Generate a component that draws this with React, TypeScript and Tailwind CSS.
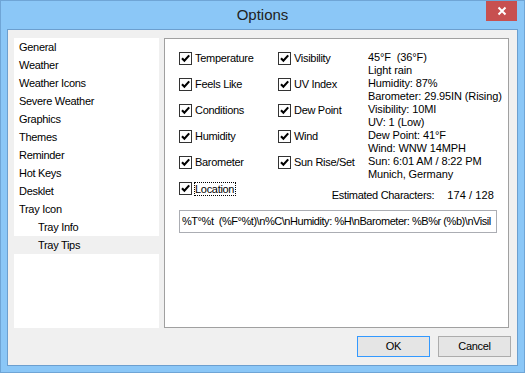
import React from "react";

const font = { fontFamily: '"Liberation Sans", Arial, sans-serif' };

const navItems = [
  { label: "General", indent: false },
  { label: "Weather", indent: false },
  { label: "Weather Icons", indent: false },
  { label: "Severe Weather", indent: false },
  { label: "Graphics", indent: false },
  { label: "Themes", indent: false },
  { label: "Reminder", indent: false },
  { label: "Hot Keys", indent: false },
  { label: "Desklet", indent: false },
  { label: "Tray Icon", indent: false },
  { label: "Tray Info", indent: true },
  { label: "Tray Tips", indent: true, selected: true },
];

const colOne = ["Temperature", "Feels Like", "Conditions", "Humidity", "Barometer"];
const colTwo = ["Visibility", "UV Index", "Dew Point", "Wind", "Sun Rise/Set"];

const preview = [
  "45°F  (36°F)",
  "Light rain",
  "Humidity: 87%",
  "Barometer: 29.95IN (Rising)",
  "Visibility: 10MI",
  "UV: 1 (Low)",
  "Dew Point: 41°F",
  "Wind: WNW 14MPH",
  "Sun: 6:01 AM / 8:22 PM",
  "Munich, Germany",
];

const CheckBox = () => (
  <svg width="13" height="13" viewBox="0 0 13 13" className="shrink-0">
    <rect x="0.5" y="0.5" width="12" height="12" fill="#fff" stroke="#333" />
    <path d="M3 6.2 L5.4 8.8 L10.2 3.4" fill="none" stroke="#000" strokeWidth="2.1" />
  </svg>
);

const CheckRow = ({ label, focused }: { label: string; focused?: boolean }) => (
  <div className="flex h-[13px] items-center gap-[3px]">
    <CheckBox />
    {focused ? (
      <span className="-ml-px border border-dotted border-black leading-[12px] pr-px">{label}</span>
    ) : (
      <span className="leading-[13px] whitespace-nowrap">{label}</span>
    )}
  </div>
);

export default function App() {
  return (
    <div
      className="w-[525px] h-[373px] bg-[#8bc7f7] border border-[#6fa5d6] text-[11px] tracking-[-0.3px] text-black"
      style={font}
    >
      <div className="relative h-[28px] flex items-center justify-center">
        <span className="text-[15px] tracking-normal text-[#222] pt-[1px]">Options</span>
        <div className="absolute top-0 right-[7px] w-[31px] h-[20px] bg-[#c75050] flex items-center justify-center">
          <svg width="10" height="10" viewBox="0 0 10 10">
            <path d="M1.5 1.5 L8.5 8.5 M8.5 1.5 L1.5 8.5" stroke="#fff" strokeWidth="2" />
          </svg>
        </div>
      </div>

      <div className="mx-[6px] h-[337px] border border-[#6c9fcf] bg-[#f0f0f0] flex flex-col">
        <div className="flex pl-[6px] pt-[8px] gap-[5px]">
          <div className="w-[145px] h-[290px] bg-white">
            {navItems.map((item) => (
              <div
                key={item.label}
                className={`h-[18px] flex items-center ${item.indent ? "pl-[24px]" : "pl-[5px]"} ${
                  item.selected ? "bg-[#f0f0f0]" : ""
                }`}
              >
                {item.label}
              </div>
            ))}
          </div>

          <div className="w-[345px] h-[290px] bg-white border border-[#a0a0a0] pl-[14px] pt-[13px]">
            <div className="flex">
              <div className="w-[99px] shrink-0 flex flex-col gap-[13px]">
                {colOne.map((l) => (
                  <CheckRow key={l} label={l} />
                ))}
                <CheckRow label="Location" focused />
              </div>
              <div className="flex-1 flex flex-col">
                <div className="flex">
                  <div className="w-[90px] shrink-0 flex flex-col gap-[13px]">
                    {colTwo.map((l) => (
                      <CheckRow key={l} label={l} />
                    ))}
                  </div>
                  <div className="-mt-px flex flex-col leading-[13px] whitespace-pre tracking-[-0.12px]">
                    {preview.map((l) => (
                      <div key={l}>{l}</div>
                    ))}
                  </div>
                </div>
                <div className="mt-[8px] flex justify-end pr-[14px] gap-[13px] leading-[13px]">
                  <span>Estimated Characters:</span>
                  <span className="tracking-[0.1px]">174 / 128</span>
                </div>
              </div>
            </div>
            <div className="mt-[8px] w-[318px] h-[23px] border border-[#abadb3] flex items-center pl-[2px] overflow-hidden whitespace-pre tracking-[-0.45px]">
              {"%T°%t  (%F°%t)\\n%C\\nHumidity: %H\\nBarometer: %B%r (%b)\\nVisil"}
            </div>
          </div>
        </div>

        <div className="flex justify-end gap-[8px] pr-[6px] mt-[8px]">
          <button className="w-[73px] h-[21px] border border-[#3399ff] bg-[#e5e5e5] flex items-center justify-center">
            OK
          </button>
          <button className="w-[73px] h-[21px] border border-[#acacac] bg-[#e5e5e5] flex items-center justify-center">
            Cancel
          </button>
        </div>
      </div>
    </div>
  );
}
